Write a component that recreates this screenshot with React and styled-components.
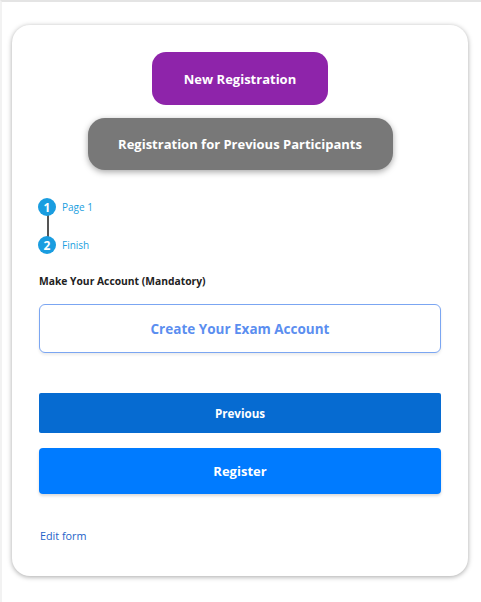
import styled, { createGlobalStyle } from "styled-components";

const GlobalStyle = createGlobalStyle`
  body {
    margin: 0;
    background: #fff;
    font-family: "Segoe UI", "Open Sans", "Noto Sans", sans-serif;
  }
`;

const Page = styled.div`
  height: 602px;
  box-sizing: border-box;
  border-top: 2px solid #e4e4e4;
  border-left: 2px solid #f2f2f2;
  padding: 23px 0 0 10px;
`;

const Card = styled.div`
  width: 456px;
  height: 551px;
  box-sizing: border-box;
  background: #fff;
  border-radius: 18px;
  box-shadow: 0 1px 5px rgba(0, 0, 0, 0.35);
  padding: 27px 27px 0;
  display: flex;
  flex-direction: column;
`;

const TopButtons = styled.div`
  display: flex;
  flex-direction: column;
  align-items: center;
  gap: 13px;
`;

const PillButton = styled.button`
  border: 0;
  color: #fff;
  font-family: inherit;
  font-weight: 700;
  font-size: 13px;
  cursor: pointer;
  padding: 0;
  background: ${(props) => (props.gray ? "#787878" : "#8e24aa")};
  width: ${(props) => (props.gray ? "305px" : "176px")};
  height: ${(props) => (props.gray ? "52px" : "53px")};
  border-radius: ${(props) => (props.gray ? "17px" : "14px")};
  box-shadow: ${(props) =>
    props.gray ? "0 2px 6px rgba(0,0,0,0.35)" : "none"};
`;

const Steps = styled.div`
  margin-top: 28px;
  display: flex;
  flex-direction: column;
  gap: 20px;
  position: relative;
`;

const StepLine = styled.div`
  position: absolute;
  left: 8px;
  top: 16px;
  width: 2px;
  height: 24px;
  background: #555;
`;

const Step = styled.div`
  display: flex;
  align-items: center;
  gap: 6px;
  position: relative;
`;

const StepDot = styled.span`
  width: 18px;
  height: 18px;
  border-radius: 50%;
  background: #1a9de0;
  color: #fff;
  font-size: 12px;
  font-weight: 700;
  display: flex;
  align-items: center;
  justify-content: center;
  margin-left: -1px;
`;

const StepLabel = styled.span`
  color: #1aa0e0;
  font-size: 10px;
`;

const SectionTitle = styled.div`
  margin-top: 20px;
  font-size: 10.3px;
  font-weight: 700;
  color: #222;
  line-height: 14px;
`;

const OutlineButton = styled.button`
  margin-top: 16px;
  height: 49px;
  width: 100%;
  background: #fff;
  border: 1px solid #7ba6f2;
  border-radius: 6px;
  color: #5b8ef0;
  font-family: inherit;
  font-size: 13.5px;
  font-weight: 700;
  box-shadow: 0 2px 3px rgba(0, 0, 0, 0.08);
  cursor: pointer;
`;

const SolidButton = styled.button`
  width: 100%;
  border: 0;
  color: #fff;
  font-family: inherit;
  font-weight: 700;
  cursor: pointer;
  margin-top: ${(props) => (props.dark ? "40px" : "15px")};
  height: ${(props) => (props.dark ? "40px" : "46px")};
  background: ${(props) => (props.dark ? "#066bd1" : "#007bff")};
  border-radius: ${(props) => (props.dark ? "2px" : "4px")};
  font-size: ${(props) => (props.dark ? "11.6px" : "13px")};
  box-shadow: ${(props) =>
    props.dark ? "none" : "0 2px 3px rgba(0,0,0,0.15)"};
`;

const EditLink = styled.a`
  margin-top: 34px;
  font-size: 10.8px;
  color: #2563c9;
  text-decoration: none;
  align-self: flex-start;
  margin-left: 1px;
`;

export default function App() {
  return (
    <>
      <GlobalStyle />
      <Page>
        <Card>
          <TopButtons>
            <PillButton>New Registration</PillButton>
            <PillButton gray>Registration for Previous Participants</PillButton>
          </TopButtons>

          <Steps>
            <StepLine />
            <Step>
              <StepDot>1</StepDot>
              <StepLabel>Page 1</StepLabel>
            </Step>
            <Step>
              <StepDot>2</StepDot>
              <StepLabel>Finish</StepLabel>
            </Step>
          </Steps>

          <SectionTitle>Make Your Account (Mandatory)</SectionTitle>
          <OutlineButton>Create Your Exam Account</OutlineButton>

          <SolidButton dark>Previous</SolidButton>
          <SolidButton>Register</SolidButton>

          <EditLink href="#">Edit form</EditLink>
        </Card>
      </Page>
    </>
  );
}
